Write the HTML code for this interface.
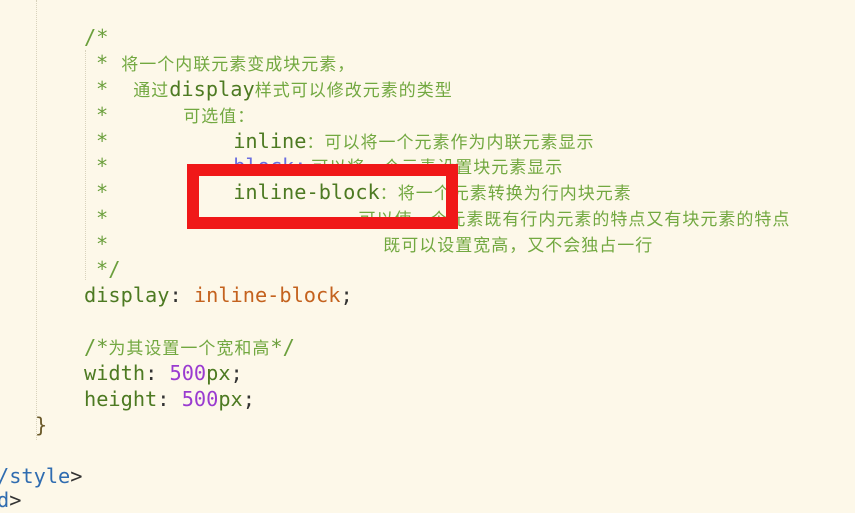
<!DOCTYPE html>
<html><head><meta charset="utf-8"><style>
body{margin:0;width:855px;height:506px;background:#fdf8e9;overflow:hidden;position:relative;font-family:"DejaVu Sans Mono","Noto Sans CJK SC",monospace;}
.l{position:absolute;white-space:pre;font-size:20.3px;line-height:26px;height:26px;}
.c{color:#6b9f3c;}
.z{font-family:"Noto Sans CJK SC",sans-serif;font-size:17px;letter-spacing:1px;color:#72a840;}
.k{color:#4d7a22;}
.o{color:#c4621e;}
.p{color:#9a3bd0;}
.b{color:#2f6cb0;}
.d{color:#333;}
.g{position:absolute;top:0;width:0;border-left:1px dotted #d8d2bc;}
.box{position:absolute;left:187px;top:164px;width:247px;height:41px;border:12px solid #f01818;}
</style></head><body>
<div class="g" style="left:36px;height:440px"></div>
<div class="g" style="left:85px;top:50px;height:230px"></div>
<div class="l c" style="left:84px;top:24px">/*</div>
<div class="l c" style="left:96px;top:50px">*<span class="z" style="margin-left:13px">将一个内联元素变成块元素，</span></div>
<div class="l c" style="left:96px;top:76px">*<span class="z" style="margin-left:25px">通过</span><span class="k">display</span><span class="z">样式可以修改元素的类型</span></div>
<div class="l c" style="left:96px;top:102px">*<span class="z" style="margin-left:75px">可选值：</span></div>
<div class="l c" style="left:96px;top:128px">*<span class="k" style="margin-left:125px">inline</span><span class="z">：可以将一个元素作为内联元素显示</span></div>
<div class="l c" style="left:96px;top:153px">*<span style="margin-left:125px;color:#6b6ee0">block:</span><span class="z"> 可以将一个元素设置块元素显示</span></div>
<div class="l c" style="left:96px;top:179px">*<span class="k" style="margin-left:125px">inline-block</span><span class="z">：将一个元素转换为行内块元素</span></div>
<div class="l c" style="left:96px;top:205px">*<span style="margin-left:230px;color:#6b6ee0">-</span><span class="z" style="margin-left:8px">可以使一个元素既有行内元素的特点又有块元素的特点</span></div>
<div class="l c" style="left:96px;top:231px">*<span class="z" style="margin-left:275px">既可以设置宽高，又不会独占一行</span></div>
<div class="l c" style="left:96px;top:256px">*/</div>
<div class="l" style="left:84px;top:282px"><span class="k">display</span><span class="d">: </span><span class="o">inline-block</span><span class="d">;</span></div>
<div class="l c" style="left:84px;top:334px">/*<span class="z">为其设置一个宽和高</span>*/</div>
<div class="l" style="left:84px;top:360px"><span class="k">width</span><span class="d">: </span><span class="p">500</span><span class="k">px</span><span class="d">;</span></div>
<div class="l" style="left:84px;top:386px"><span class="k">height</span><span class="d">: </span><span class="p">500</span><span class="k">px</span><span class="d">;</span></div>
<div class="l" style="left:35px;top:412px;color:#6b5a2a">}</div>
<div class="l b" style="left:-3px;top:463px">/style<span class="d">&gt;</span></div>
<div class="l b" style="left:-3px;top:487px">d<span class="d">&gt;</span></div>
<div class="box"></div>
</body></html>
